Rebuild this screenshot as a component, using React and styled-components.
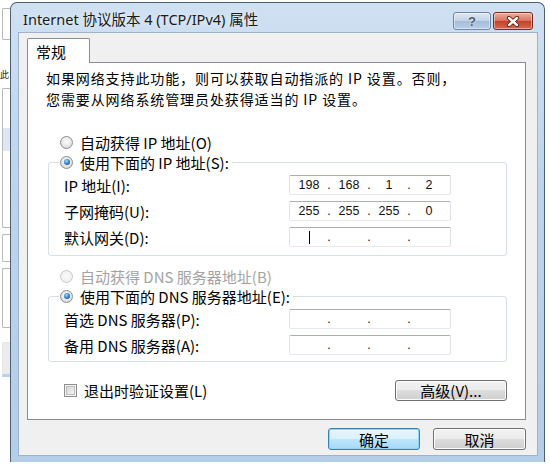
import React from "react";
import styled, { createGlobalStyle } from "styled-components";

const GlobalStyle = createGlobalStyle`
  html, body {
    margin: 0;
    padding: 0;
    background: #fff;
  }
  body {
    width: 550px;
    height: 464px;
    overflow: hidden;
    font-family: "Noto Sans CJK SC", sans-serif;
    color: #000;
  }
`;

const CJK = `"Noto Sans CJK SC", "Noto Sans", sans-serif`;

const Page = styled.div`
  display: flex;
  width: 550px;
  height: 464px;
  background: #fff;
`;

/* the window behind, only its right edge peeks out */
const Backdrop = styled.div`
  width: 10px;
  flex-shrink: 0;
  display: flex;
  flex-direction: column;
  overflow: hidden;
`;

const Stub = styled.div`
  height: ${(p) => p.$h}px;
  margin-top: ${(p) => p.$mt || 0}px;
  margin-left: 2px;
  box-sizing: border-box;
  border: 1px solid ${(p) => p.$border || "#b9b9b9"};
  border-right: none;
  border-radius: 2px 0 0 2px;
  background: ${(p) => p.$bg || "#fff"};
`;

const StubGlyph = styled.div`
  margin-top: ${(p) => p.$mt}px;
  font: 9px ${CJK};
  line-height: 10px;
  white-space: nowrap;
  color: #222;
`;

const Window = styled.div`
  width: 535px;
  height: 460px;
  margin-top: 2px;
  flex-shrink: 0;
  box-sizing: border-box;
  border: 1px solid #4f5f73;
  border-bottom: none;
  border-radius: 7px 7px 0 0;
  background: linear-gradient(180deg, #cfe0f2 0%, #bdd4ec 40%, #b4cde8 100%);
  padding: 0 6px 6px 7px;
  display: flex;
  flex-direction: column;
`;

const TitleBar = styled.div`
  height: 29px;
  display: flex;
  align-items: center;
  padding-left: 5px;
`;

const Title = styled.div`
  flex: 1;
  font: 14.5px "Noto Sans", "Noto Sans CJK SC", sans-serif;
  color: #1b1b1b;
  text-shadow: 0 0 6px rgba(255, 255, 255, 0.9);
  padding-top: 2px;
`;

const Controls = styled.div`
  align-self: flex-start;
  margin-top: 9px;
  margin-right: 5px;
  display: flex;
  gap: 2px;
`;

const CaptionButton = styled.div`
  width: ${(p) => p.$w}px;
  height: 18px;
  box-sizing: border-box;
  border-radius: 3px;
  display: flex;
  align-items: center;
  justify-content: center;
  border: 1px solid ${(p) => (p.$close ? "#7b2b1d" : "#6f86a4")};
  background: ${(p) =>
    p.$close
      ? "linear-gradient(180deg, #eab1a3 0%, #d9745d 48%, #c4412a 52%, #d6674e 100%)"
      : "linear-gradient(180deg, #dfe8f3 0%, #c3d3e7 48%, #a5bcda 52%, #b9cde6 100%)"};
  box-shadow: inset 0 0 0 1px rgba(255, 255, 255, 0.45);
`;

const HelpMark = styled.span`
  font: bold 13px "Liberation Sans", sans-serif;
  color: #4d5a6b;
  text-shadow: 0 0 2px #fff;
  line-height: 1;
`;

const Client = styled.div`
  flex: 1;
  background: #f0f0f0;
  border: 1px solid #9fb2c7;
  padding: 5px 11px 0 8px;
  display: flex;
  flex-direction: column;
`;

const TabRow = styled.div`
  display: flex;
`;

const Tab = styled.div`
  position: relative;
  z-index: 1;
  width: 63px;
  height: 25px;
  box-sizing: border-box;
  margin-bottom: -1px;
  border: 1px solid #898c95;
  border-bottom: none;
  border-radius: 2px 2px 0 0;
  background: #fff;
  font: 15px ${CJK};
  line-height: 22px;
  padding-left: 8px;
  padding-top: 2px;
`;

const Panel = styled.div`
  height: 358px;
  box-sizing: border-box;
  border: 1px solid #898c95;
  background: #fff;
  padding: 5px 18px 0 20px;
  display: flex;
  flex-direction: column;
`;

const Intro = styled.p`
  margin: 0 0 0 -2px;
  font: 14px ${CJK};
  line-height: 20.5px;
  letter-spacing: 0.9px;
`;

const OptionRow = styled.div`
  height: 20px;
  margin-top: ${(p) => p.$mt || 0}px;
  display: flex;
  align-items: center;
  gap: 7px;
  padding-left: 12px;
  font: 15px ${CJK};
  color: ${(p) => (p.$disabled ? "#a3a3a3" : "#000")};
`;

const RadioDot = styled.span`
  width: 13px;
  height: 13px;
  flex-shrink: 0;
  box-sizing: border-box;
  border-radius: 50%;
  border: 1px solid ${(p) => (p.$disabled ? "#c8c8c8" : "#8a8c8e")};
  background: ${(p) =>
    p.$disabled
      ? "radial-gradient(circle at 50% 45%, #fafafa, #ececec)"
      : "radial-gradient(circle at 50% 40%, #ffffff 0%, #e6e6e6 55%, #c9c9c9 100%)"};
  display: flex;
  align-items: center;
  justify-content: center;
  &::after {
    content: "";
    display: ${(p) => (p.$checked ? "block" : "none")};
    width: 6px;
    height: 6px;
    border-radius: 50%;
    background: radial-gradient(circle at 40% 35%, #a6dcfb 0%, #2a7bc5 55%, #0d3f78 100%);
  }
`;

const Group = styled.fieldset`
  margin: 0;
  padding: 3px 55px ${(p) => p.$pb}px 15px;
  border: 1px solid #d5dfe5;
  border-radius: 3px;
  display: flex;
  flex-direction: column;
  gap: 6px;
  min-width: 0;
`;

const Legend = styled.legend`
  margin-left: -5px;
  padding: 0 3px 0 1px;
  height: 20px;
  display: flex;
  align-items: center;
  gap: 7px;
  font: 15px ${CJK};
`;

const FieldRow = styled.div`
  height: 20px;
  display: flex;
  align-items: center;
`;

const Label = styled.span`
  flex: 1;
  font: 15px ${CJK};
`;

const IpBox = styled.div`
  width: 162px;
  height: 20px;
  box-sizing: border-box;
  border: 1px solid;
  border-color: #abadb3 #dbdfe6 #e3e9ef #e2e3ea;
  border-radius: 2px;
  padding-left: 3px;
  display: flex;
  align-items: center;
  font: 12.5px "Liberation Sans", sans-serif;
  color: #111;
`;

const Segment = styled.span`
  width: 40px;
  display: flex;
  align-items: center;
`;

const Octet = styled.span`
  width: 32px;
  text-align: center;
  display: flex;
  justify-content: center;
`;

const Dot = styled.span`
  width: 8px;
  text-align: center;
`;

const Caret = styled.span`
  width: 1px;
  height: 13px;
  background: #000;
`;

const BottomRow = styled.div`
  margin-top: 18px;
  height: 21px;
  display: flex;
  align-items: center;
  justify-content: space-between;
`;

const CheckLabel = styled.label`
  display: flex;
  align-items: center;
  gap: 7px;
  padding-left: 16px;
  font: 15px ${CJK};
`;

const CheckBox = styled.span`
  width: 13px;
  height: 13px;
  box-sizing: border-box;
  border: 1px solid #8f8f8f;
  box-shadow: inset 0 0 0 1px #f4f4f4, inset 0 0 0 2px #bdbdbd;
  background-image: linear-gradient(135deg, #cfcfcf, #fbfbfb);
`;

const Button = styled.button`
  width: ${(p) => p.$w}px;
  height: ${(p) => p.$h}px;
  box-sizing: border-box;
  padding: 0;
  border-radius: 3px;
  border: 1px solid ${(p) => (p.$default ? "#3c7fb1" : "#707070")};
  background: ${(p) =>
    p.$default
      ? "linear-gradient(180deg, #eaf6fd 0%, #d9f0fc 49%, #bee6fd 50%, #a7d9f5 100%)"
      : "linear-gradient(180deg, #f2f2f2 0%, #ebebeb 49%, #dddddd 50%, #cfcfcf 100%)"};
  box-shadow: inset 0 0 0 1px ${(p) => (p.$default ? "#8fd5f7" : "#fcfcfc")};
  font: 15px ${CJK};
  line-height: 1;
  color: #000;
`;

const Footer = styled.div`
  padding-top: 8px;
  display: flex;
  justify-content: flex-end;
  gap: 13px;
`;

const CloseIcon = () => (
  <svg width="14" height="11" viewBox="0 0 14 11">
    <path d="M3 2 L11 9 M11 2 L3 9" stroke="#5a1a10" strokeWidth="4.2" strokeLinecap="round" />
    <path d="M3 2 L11 9 M11 2 L3 9" stroke="#fff" strokeWidth="2.4" strokeLinecap="round" />
  </svg>
);

const IpField = ({ value, caret }) => {
  const parts = value || ["", "", "", ""];
  return (
    <IpBox>
      {parts.map((p, i) => (
        <Segment key={i}>
          <Octet>{caret && i === 0 ? <Caret /> : p}</Octet>
          {i < 3 && <Dot>.</Dot>}
        </Segment>
      ))}
    </IpBox>
  );
};

export default function App() {
  return (
    <>
      <GlobalStyle />
      <Page>
        <Backdrop>
          <Stub $mt={8} $h={32} />
          <StubGlyph $mt={30}>此</StubGlyph>
          <Stub $mt={8} $h={140} $bg="linear-gradient(180deg, #fff 0%, #fff 28%, #dbe8f4 28%, #dbe8f4 45%, #fff 45%)" />
          <Stub $mt={6} $h={28} />
          <Stub $mt={6} $h={60} />
          <Stub $mt={14} $h={32} $border="#e6e6e6" $bg="#ececec" />
          <Stub $mt={0} $h={3} $border="#b7d2ec" $bg="#b7d2ec" />
        </Backdrop>
        <Window>
          <TitleBar>
            <Title>Internet 协议版本 4 (TCP/IPv4) 属性</Title>
            <Controls>
              <CaptionButton $w={38}>
                <HelpMark>?</HelpMark>
              </CaptionButton>
              <CaptionButton $w={40} $close>
                <CloseIcon />
              </CaptionButton>
            </Controls>
          </TitleBar>
          <Client>
            <TabRow>
              <Tab>常规</Tab>
            </TabRow>
            <Panel>
              <Intro>
                如果网络支持此功能，则可以获取自动指派的 IP 设置。否则，
                <br />
                您需要从网络系统管理员处获得适当的 IP 设置。
              </Intro>

              <OptionRow $mt={23}>
                <RadioDot />
                自动获得 IP 地址(O)
              </OptionRow>
              <Group $pb={8}>
                <Legend>
                  <RadioDot $checked />
                  使用下面的 IP 地址(S):
                </Legend>
                <FieldRow>
                  <Label>IP 地址(I):</Label>
                  <IpField value={["198", "168", "1", "2"]} />
                </FieldRow>
                <FieldRow>
                  <Label>子网掩码(U):</Label>
                  <IpField value={["255", "255", "255", "0"]} />
                </FieldRow>
                <FieldRow>
                  <Label>默认网关(D):</Label>
                  <IpField caret />
                </FieldRow>
              </Group>

              <OptionRow $mt={10} $disabled>
                <RadioDot $disabled />
                自动获得 DNS 服务器地址(B)
              </OptionRow>
              <Group $pb={6}>
                <Legend>
                  <RadioDot $checked />
                  使用下面的 DNS 服务器地址(E):
                </Legend>
                <FieldRow>
                  <Label>首选 DNS 服务器(P):</Label>
                  <IpField />
                </FieldRow>
                <FieldRow>
                  <Label>备用 DNS 服务器(A):</Label>
                  <IpField />
                </FieldRow>
              </Group>

              <BottomRow>
                <CheckLabel>
                  <CheckBox />
                  退出时验证设置(L)
                </CheckLabel>
                <Button $w={112} $h={21}>高级(V)...</Button>
              </BottomRow>
            </Panel>
            <Footer>
              <Button $w={92} $h={22} $default>确定</Button>
              <Button $w={93} $h={22}>取消</Button>
            </Footer>
          </Client>
        </Window>
      </Page>
    </>
  );
}
